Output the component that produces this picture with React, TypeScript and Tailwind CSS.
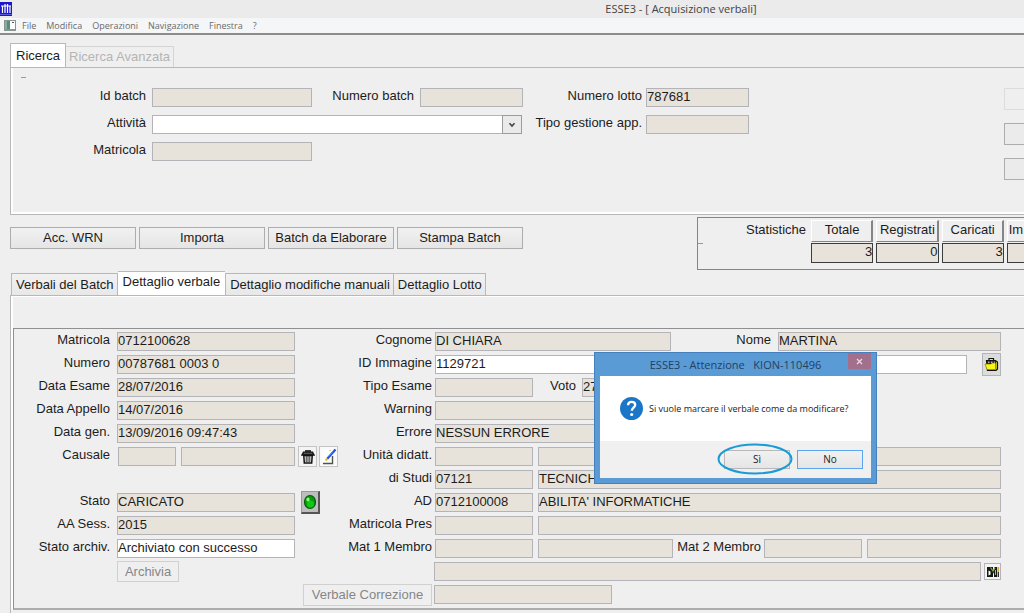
import type { ReactNode } from 'react';

const UI_FONT = "font-['Liberation_Sans',Arial,sans-serif]";
const SYS_FONT = "font-['Open_Sans','Noto_Sans',sans-serif]";

type FieldProps = {
  id: string;
  label?: string;
  hint?: string;
  value?: string;
  width: string;
  labelClass?: string;
  white?: boolean;
};

function Field({ id, label, hint, value = '', width, labelClass = '', white = false }: FieldProps) {
  return (
    <>
      {label && (
        <label htmlFor={id} className={`shrink-0 pb-1 text-right leading-4 whitespace-nowrap ${labelClass}`}>
          {label}
        </label>
      )}
      <input
        id={id}
        aria-label={label ? undefined : hint}
        defaultValue={value}
        readOnly={!white}
        className={`h-[19px] min-w-0 border border-[#b4b4b8] pb-[3px] leading-4 outline-none ${white ? 'bg-white' : 'bg-[#e7e3da]'} ${width}`}
      />
    </>
  );
}

function Row({ children }: { children?: ReactNode }) {
  return <div className="flex h-[19px] items-center">{children}</div>;
}

function Left({ children }: { children?: ReactNode }) {
  return <div className="flex h-[19px] w-[324px] shrink-0 items-center">{children}</div>;
}

function PushButton({ children, className = '' }: { children: ReactNode; className?: string }) {
  return (
    <button
      type="button"
      className={`h-[22px] border border-[#adadad] bg-gradient-to-b from-[#f1f1f1] to-[#e5e5e5] leading-5 ${className}`}
    >
      {children}
    </button>
  );
}

function AppLogo() {
  return (
    <svg width="12" height="14" viewBox="0 0 12 14" aria-hidden="true">
      <rect width="12" height="14" fill="#1a1ac8" />
      <path d="M1 4h10M2.5 4v7M5 2v9M7.5 2v9M10 4v7" stroke="#fff" strokeWidth="1.2" fill="none" />
      <path d="M0 12.5h12" stroke="#5a5ae0" />
    </svg>
  );
}

function WindowIcon() {
  return (
    <svg width="12" height="11" viewBox="0 0 12 11" aria-hidden="true">
      <rect x=".5" y=".5" width="11" height="9" fill="#fff" stroke="#8b9590" />
      <rect x="1" y="1" width="5" height="8" fill="#4f8f80" />
      <rect x="1" y="1" width="2" height="8" fill="#86ab9f" />
      <path d="M8 2.5h2" stroke="#555" />
      <path d="M0 10.5h12" stroke="#8b9590" />
    </svg>
  );
}

function TrashIcon() {
  return (
    <svg width="14" height="16" viewBox="0 0 14 16" aria-hidden="true">
      <path d="M4 2h6" stroke="#111" strokeWidth="1.6" />
      <path d="M2.500 3.200h9l1.500 2.800H1z" fill="#555" stroke="#111" strokeWidth="1.300" />
      <path d="M2.800 6.500h8.400l-.5 7.500H3.300z" fill="#fff" stroke="#111" strokeWidth="1.500" />
      <path d="M5.200 7v6M7 7v6M8.800 7v6" stroke="#111" strokeWidth=".9" />
    </svg>
  );
}

function EditIcon() {
  return (
    <svg width="16" height="18" viewBox="0 0 16 18" aria-hidden="true">
      <path d="M1 2h11v13H1z" fill="#fff" />
      <path d="M2 15.500h9.500V8" stroke="#4a554c" strokeWidth="1.400" fill="none" />
      <path d="M6 11L14.500 1.500" stroke="#2546e8" strokeWidth="2.200" />
      <path d="M7.500 8.500L12 3.500" stroke="#4fa8f8" strokeWidth=".8" />
      <path d="M4.500 12.500L6.500 10.500" stroke="#d9c33a" strokeWidth="2" />
      <path d="M8 2.500h2" stroke="#c9d8a0" />
    </svg>
  );
}

function LedIcon() {
  return (
    <svg width="14" height="18" viewBox="0 0 14 18" aria-hidden="true">
      <ellipse cx="7" cy="9" rx="5.500" ry="6.500" fill="#0a9a0a" stroke="#075c12" strokeWidth="1.200" />
      <ellipse cx="7.500" cy="11" rx="3.500" ry="3.500" fill="#12c814" />
      <ellipse cx="5" cy="6.500" rx="1.600" ry="2" fill="#7dff6a" />
    </svg>
  );
}

function FolderIcon() {
  return (
    <svg width="15" height="15" viewBox="0 0 15 15" aria-hidden="true">
      <path d="M5 3V1.500h4.500V3" stroke="#111" strokeWidth="1.200" fill="none" />
      <path d="M2.500 3.500h9l2 1.500v7l-1.500 1.500H3.500z" fill="#d8d010" stroke="#111" strokeWidth="1.200" />
      <path d="M3 4h9v3H3z" fill="#222" />
      <path d="M4 5.200h1.500M7 5.200h1.500M10 5.200h1" stroke="#fff" />
      <path d="M1 7h6l1-1h3.500v6.500H3z" fill="#fbf61a" stroke="#6f6a05" strokeWidth=".6" />
    </svg>
  );
}

function BinocularIcon() {
  return (
    <svg width="14" height="12" viewBox="0 0 14 12" aria-hidden="true">
      <path d="M1 1h6v3l1.500-1V1H11v10H8V6L7 8v3H1z" fill="#151a10" />
      <path d="M2.500 4.500l2 1v3l-2 1z" fill="#fff" />
      <path d="M4.500 1.500L7 5l2-3" stroke="#8faa60" strokeWidth="1.200" fill="none" />
      <path d="M12.300 1v5" stroke="#d3a645" strokeWidth="1.600" />
      <path d="M12.300 6v5" stroke="#151a10" strokeWidth="1.200" />
      <path d="M9.500 4v5" stroke="#d8d8c0" strokeWidth=".8" />
    </svg>
  );
}

function IconButton({ label, className, children }: { label: string; className: string; children: ReactNode }) {
  return (
    <button type="button" aria-label={label} className={`flex shrink-0 items-center justify-center border ${className}`}>
      {children}
    </button>
  );
}

function SearchPanel() {
  return (
    <section className="pl-[10px]">
      <div role="tablist" className="flex items-end">
        <button type="button" role="tab" aria-selected="true" className="h-6 border border-b-0 border-[#b8b8b8] bg-white px-[5px]">
          Ricerca
        </button>
        <button type="button" role="tab" aria-selected="false" className="h-[21px] border border-b-0 border-l-0 border-[#d5d5d5] px-[3px] text-[#b4b4b4]">
          Ricerca Avanzata
        </button>
      </div>
      <div className="h-[148px] border-y border-l border-[#b8b8b8]">
        <div className="flex h-full items-start border-b-2 border-l-2 border-white">
          <div className="h-5 w-[14px] shrink-0">
            <div className="mt-[9px] ml-2 h-px w-[5px] bg-[#999]" />
          </div>
          <form className="mt-5 flex grow flex-col gap-2">
            <Row>
              <Field id="id-batch" label="Id batch" width="ml-[6px] w-40" labelClass="w-[119px]" />
              <Field id="num-batch" label="Numero batch" width="ml-[6px] w-[103px]" labelClass="w-[102px]" />
              <Field id="num-lotto" label="Numero lotto" value="787681" width="ml-1 w-[103px]" labelClass="w-[119px]" />
            </Row>
            <Row>
              <label htmlFor="attivita" className="w-[119px] shrink-0 pb-1 text-right leading-4">Attività</label>
              <div className="relative ml-[6px] h-[19px] w-[370px]">
                <select id="attivita" className="block h-[19px] w-full appearance-none border border-[#b4b4b8] bg-white">
                  <option></option>
                </select>
                <span className="pointer-events-none absolute top-0 right-0 flex h-[19px] w-5 items-center justify-center border border-[#9c9ca0] bg-[#eaeaea]">
                  <svg width="8" height="6" viewBox="0 0 8 6" aria-hidden="true">
                    <path d="M1.500 1.200L4 4L6.500 1.200" stroke="#444" strokeWidth="1.600" fill="none" />
                  </svg>
                </span>
              </div>
              <Field id="tipo-gestione" label="Tipo gestione app." width="ml-1 w-[103px]" labelClass="w-[120px]" />
            </Row>
            <Row>
              <Field id="matr-ricerca" label="Matricola" width="ml-[6px] w-40" labelClass="w-[119px]" />
            </Row>
          </form>
          <div className="mt-5 flex w-5 shrink-0 flex-col gap-[13px]">
            <button type="button" disabled aria-label="Azione 1" className="h-[22px] border border-r-0 border-[#dcdcdc] bg-[#efefef]" />
            <button type="button" aria-label="Azione 2" className="h-[22px] border border-r-0 border-[#adadad] bg-[#ebebeb]" />
            <button type="button" aria-label="Azione 3" className="h-[22px] border border-r-0 border-[#adadad] bg-[#ebebeb]" />
          </div>
        </div>
      </div>
    </section>
  );
}

const STATS = [
  { name: 'Totale', value: '3', align: 'text-center' },
  { name: 'Registrati', value: '0', align: 'text-center' },
  { name: 'Caricati', value: '3', align: 'text-center' },
  { name: 'Im', value: '', align: 'text-left' },
];

function Statistics() {
  return (
    <div className="flex h-[53px] w-[327px] shrink-0 items-start overflow-hidden border border-r-0 border-[#858585]">
      <div className="mt-[25px] h-px w-[5px] shrink-0 bg-[#999]" />
      <span className="mt-1 w-[105px] shrink-0 pr-[2px] text-right leading-4">Statistiche</span>
      <table className="mt-px w-[264px] shrink-0 table-fixed border-separate border-spacing-x-[3px] border-spacing-y-px">
        <thead>
          <tr>
            {STATS.map(({ name, align }) => (
              <th key={name} className={`h-[22px] border border-r-2 border-t-white border-r-[#858585] border-b-[#858585] border-l-white p-0 pb-[2px] pl-px leading-4 font-normal ${align}`}>
                {name}
              </th>
            ))}
          </tr>
        </thead>
        <tbody>
          <tr>
            {STATS.map(({ name, value }) => (
              <td key={name} className="h-5 border border-[#3c3c3c] bg-[#e7e3da] p-0 pb-[2px] text-right leading-4">
                {value}
              </td>
            ))}
          </tr>
        </tbody>
      </table>
    </div>
  );
}

function DetailPanel() {
  const idle = 'h-[22px] border border-b-0 border-[#b8b8b8] bg-gradient-to-b from-[#f1f1f1] to-[#e8e8e8] pl-1 pr-[3px]';
  const l = 'w-24 mr-[7px]';
  const m = 'w-[94px] mr-[3px]';
  return (
    <section className="flex grow flex-col pl-[10px]">
      <div role="tablist" className="flex items-end pl-px">
        <button type="button" role="tab" aria-selected="false" className={idle}>Verbali del Batch</button>
        <button type="button" role="tab" aria-selected="true" className="h-6 border-t border-[#b8b8b8] bg-white px-[5px] pb-1">Dettaglio verbale</button>
        <button type="button" role="tab" aria-selected="false" className={idle}>Dettaglio modifiche manuali</button>
        <button type="button" role="tab" aria-selected="false" className={`${idle} border-l-0`}>Dettaglio Lotto</button>
      </div>
      <div className="grow border-t border-l border-[#b8b8b8]">
        <div className="h-full border-t border-l-2 border-white pt-[31px]">
          <form className="flex flex-col gap-1 border-t border-b-2 border-l border-[#909090] border-b-[#adadad] pt-[3px] pr-[23px] pb-1">
            <Row>
              <Left><Field id="matricola" label="Matricola" value="0712100628" width="w-[178px]" labelClass={l} /></Left>
              <Field id="cognome" label="Cognome" value="DI CHIARA" width="w-[236px] shrink-0" labelClass={m} />
              <Field id="nome" label="Nome" value="MARTINA" width="grow" labelClass="w-[100px] mr-[7px]" />
            </Row>
            <Row>
              <Left><Field id="numero" label="Numero" value="00787681 0003 0" width="w-[178px]" labelClass={l} /></Left>
              <Field id="id-immagine" label="ID Immagine" value="1129721" width="grow mr-[15px]" labelClass={m} white />
              <IconButton label="Apri cartella" className="h-[23px] w-[19px] border-[#b4b4b8] bg-[#dcdcdc]"><FolderIcon /></IconButton>
            </Row>
            <Row>
              <Left><Field id="data-esame" label="Data Esame" value="28/07/2016" width="w-[178px]" labelClass={l} /></Left>
              <Field id="tipo-esame" label="Tipo Esame" width="w-[98px]" labelClass={m} />
              <Field id="voto" label="Voto" value="27" width="w-[60px]" labelClass="w-[43px] mr-[6px]" />
            </Row>
            <Row>
              <Left><Field id="data-appello" label="Data Appello" value="14/07/2016" width="w-[178px]" labelClass={l} /></Left>
              <Field id="warning" label="Warning" width="w-[400px]" labelClass={m} />
            </Row>
            <Row>
              <Left><Field id="data-gen" label="Data gen." value="13/09/2016 09:47:43" width="w-[178px]" labelClass={l} /></Left>
              <Field id="errore" label="Errore" value="NESSUN ERRORE" width="w-[400px]" labelClass={m} />
            </Row>
            <Row>
              <Left>
                <Field id="causale" label="Causale" width="ml-px w-[58px]" labelClass={l} />
                <Field id="causale-desc" hint="Descrizione causale" width="ml-[5px] w-[114px]" />
                <IconButton label="Elimina" className="ml-[3px] h-[21px] w-[19px] border-[#c4c4c4] bg-[#f4f4f4]"><TrashIcon /></IconButton>
                <IconButton label="Modifica causale" className="ml-[2px] h-[21px] w-[19px] border-[#c4c4c4] bg-[#fafafa]"><EditIcon /></IconButton>
              </Left>
              <Field id="unita" label="Unità didatt." width="w-[98px] shrink-0" labelClass={m} />
              <Field id="unita-desc" hint="Descrizione unità" width="ml-[5px] grow" />
            </Row>
            <Row>
              <Left />
              <Field id="studi" label="di Studi" value="07121" width="w-[98px] shrink-0" labelClass={m} />
              <Field id="studi-desc" hint="Corso di studi" value="TECNICHE" width="ml-[5px] grow" />
            </Row>
            <Row>
              <Left>
                <Field id="stato" label="Stato" value="CARICATO" width="w-[178px]" labelClass={l} />
                <IconButton label="Stato caricato" className="ml-[6px] h-[23px] w-[19px] border-r-2 border-b-2 border-t-[#999] border-r-[#555] border-b-[#555] border-l-[#999] bg-[#bdbdbd]"><LedIcon /></IconButton>
              </Left>
              <Field id="ad" label="AD" value="0712100008" width="w-[98px] shrink-0" labelClass={m} />
              <Field id="ad-desc" hint="Descrizione AD" value="ABILITA' INFORMATICHE" width="ml-[5px] grow" />
            </Row>
            <Row>
              <Left><Field id="aa-sess" label="AA Sess." value="2015" width="w-[178px]" labelClass={l} /></Left>
              <Field id="matr-pres" label="Matricola Pres" width="w-[98px] shrink-0" labelClass={m} />
              <Field id="matr-pres-desc" hint="Nome presidente" width="ml-[5px] grow" />
            </Row>
            <Row>
              <Left><Field id="stato-archiv" label="Stato archiv." value="Archiviato con successo" width="w-[178px]" labelClass={l} white /></Left>
              <Field id="mat1" label="Mat 1 Membro" width="w-[98px] shrink-0" labelClass={m} />
              <Field id="mat1-desc" hint="Nome membro 1" width="ml-[5px] w-[135px] shrink-0" />
              <Field id="mat2" label="Mat 2 Membro" width="w-[98px] shrink-0" labelClass="w-[88px] mr-[3px]" />
              <Field id="mat2-desc" hint="Nome membro 2" width="ml-[5px] w-0 grow" />
            </Row>
            <Row>
              <Left>
                <button type="button" disabled className="ml-[103px] h-[21px] w-[62px] border border-[#d0d0d0] leading-4 text-[#868686]">Archivia</button>
              </Left>
              <Field id="note" hint="Note" width="ml-24 mr-[3px] grow" />
              <IconButton label="Cerca" className="h-[17px] w-[17px] border-[#b4b4b8] bg-[#f4f4f4]"><BinocularIcon /></IconButton>
            </Row>
            <Row>
              <button type="button" disabled className="mr-[2px] ml-[289px] h-[22px] w-[129px] shrink-0 border border-[#d0d0d0] leading-4 text-[#868686]">Verbale Correzione</button>
              <Field id="verbale-corr" hint="Verbale correzione" width="w-[178px]" />
            </Row>
          </form>
        </div>
      </div>
    </section>
  );
}

function ConfirmDialog() {
  return (
    <div
      role="dialog"
      aria-labelledby="dialog-title"
      className={`absolute top-[352px] left-[594px] w-[283px] border border-[#4480be] bg-[#5b9bd5] px-[5px] pb-[5px] text-[#222] ${SYS_FONT}`}
    >
      <header className="relative flex h-[23px] items-center justify-center">
        <h2 id="dialog-title" className="text-[11px] leading-4 whitespace-pre text-[#24405f]">ESSE3 - Attenzione   KION-110496</h2>
        <button type="button" aria-label="Chiudi" className="absolute top-0 right-0 flex h-4 w-[23px] items-center justify-center bg-[#a2708c]">
          <svg width="7" height="7" viewBox="0 0 7 7" aria-hidden="true">
            <path d="M1 1l5 5M6 1l-5 5" stroke="#e8d8e2" strokeWidth="1.300" />
          </svg>
        </button>
      </header>
      <div className="flex h-[65px] items-center bg-white pl-5">
        <svg width="23" height="23" viewBox="0 0 23 23" aria-hidden="true" className="shrink-0">
          <circle cx="11.500" cy="11.500" r="11.500" fill="#1b76c8" />
          <path d="M8 8.300C8.100 6 9.600 4.900 11.600 4.900c2.100 0 3.600 1.200 3.600 3 0 2.600-3.400 2.900-3.400 5.800" stroke="#fff" strokeWidth="2.300" fill="none" />
          <circle cx="11.700" cy="17.500" r="1.600" fill="#fff" />
        </svg>
        <p className="ml-[6px] text-[9px] whitespace-nowrap">Si vuole marcare il verbale come da modificare?</p>
      </div>
      <footer className="flex h-[37px] items-center justify-end gap-[7px] bg-[#f0f0f0] pr-2 text-[10px]">
        <div className="relative flex">
          <button type="button" className="h-[19px] w-[66px] border border-[#b8b8b8] bg-gradient-to-b from-[#f1f1f1] to-[#e5e5e5]">Sì</button>
          <svg width="76" height="32" viewBox="0 0 76 32" aria-hidden="true" className="pointer-events-none absolute -top-[7px] -left-[7px]">
            <ellipse cx="38" cy="16" rx="36.500" ry="14.500" fill="none" stroke="#1a9bd7" strokeWidth="2" />
          </svg>
        </div>
        <button type="button" className="h-[19px] w-[66px] border border-[#5ba6f2] bg-gradient-to-b from-[#f1f1f1] to-[#e5e5e5]">No</button>
      </footer>
    </div>
  );
}

export default function App() {
  return (
    <div className={`relative flex min-h-screen flex-col overflow-hidden bg-[#efefef] text-[13px] text-[#1c1c1c] ${UI_FONT}`}>
      <header className={`flex h-[18px] items-center bg-[#ebebeb] ${SYS_FONT}`}>
        <AppLogo />
        <h1 className="grow pl-[326px] text-center text-[11px] leading-4 text-[#444]">ESSE3 - [ Acquisizione verbali]</h1>
      </header>
      <nav className={`flex h-[17px] items-center gap-[10px] border-b-2 border-[#8c8c8c] bg-[#f5f6f7] pl-1 text-[9px] text-[#6a6a6a] ${SYS_FONT}`}>
        <div className="flex items-center gap-[6px]">
          <WindowIcon />
          <button type="button">File</button>
        </div>
        <button type="button">Modifica</button>
        <button type="button">Operazioni</button>
        <button type="button">Navigazione</button>
        <button type="button">Finestra</button>
        <button type="button">?</button>
      </nav>
      <main className="flex grow flex-col pt-2">
        <SearchPanel />
        <div className="mt-[2px] flex items-start justify-between pl-[10px]">
          <div className="mt-[10px] flex gap-[3px]">
            <PushButton className="w-[126px]">Acc. WRN</PushButton>
            <PushButton className="w-[126px]">Importa</PushButton>
            <PushButton className="w-[126px]">Batch da Elaborare</PushButton>
            <PushButton className="w-[126px]">Stampa Batch</PushButton>
          </div>
          <Statistics />
        </div>
        <div className="h-px" />
        <DetailPanel />
      </main>
      <ConfirmDialog />
    </div>
  );
}
